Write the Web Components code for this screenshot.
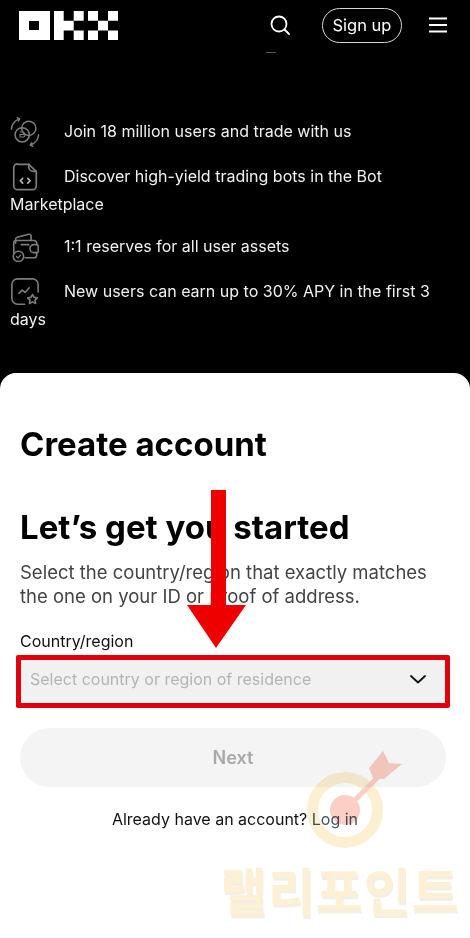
<!DOCTYPE html>
<html lang="en">
<head>
<meta charset="utf-8">
<title>OKX - Create account</title>
<style>
  html, body { margin: 0; background: #000; }
  body { font-family: Inter, "Liberation Sans", sans-serif; width: 470px; height: 938px; overflow: hidden; position: relative; }
</style>
</head>
<body>
<okx-header></okx-header>

<feature-list>
  <feature-row text="Join 18 million users and trade with us">
    <svg slot="icon" viewBox="0 0 32 32" fill="none" stroke="#7d7d7d" stroke-width="1.6" stroke-linecap="round">
      <circle cx="13" cy="19" r="7.600"/><circle cx="20" cy="12" r="7.600"/>
      <path d="M10.600 16h3.400a1.300 1.300 0 0 1 0 2.700h-3.400m0 0h3.800a1.300 1.300 0 0 1 0 2.700h-3.800z" stroke-width="1.100"/>
      <path d="M1.500 13c.4-5 3.300-9 8.500-11M8 .8l2.200 1.300-1.300 2.200M30.500 19c-.4 5-3.300 9-8.500 11M24 31.200l-2.200-1.300 1.300-2.200"/>
    </svg>
  </feature-row>
  <feature-row text="Discover high-yield trading bots in the Bot Marketplace">
    <svg slot="icon" viewBox="0 0 32 32" fill="none" stroke="#7d7d7d" stroke-width="1.8" stroke-linecap="round" stroke-linejoin="round">
      <path d="M8 2.500h12v2.500a5 5 0 0 0 5 5h3v15.500a4 4 0 0 1-4 4H8a4 4 0 0 1-4-4v-19.500a4 4 0 0 1 4-4z"/>
      <path d="M20 2.500 28 10"/>
      <path d="M13.500 17.500 11 20l2.500 2.500M19 17.500l2.500 2.500-2.500 2.500" stroke="#b5b5b5"/>
    </svg>
  </feature-row>
  <feature-row text="1:1 reserves for all user assets">
    <svg slot="icon" viewBox="0 0 32 32" fill="none" stroke="#7d7d7d" stroke-width="1.7" stroke-linecap="round" stroke-linejoin="round">
      <path d="M6 12V7.500a2 2 0 0 1 1.500-1.900L20 2.500a2 2 0 0 1 2.500 2V9"/>
      <path d="M9 9h16.500a3 3 0 0 1 3 3v1.500M4 22v-10.500a2.500 2.500 0 0 1 2.500-2.500H9M16 27.500h9.500a3 3 0 0 0 3-3V22"/>
      <path d="M28.500 13.500h-3a4.200 4.200 0 0 0 0 8.500h3a1.500 1.500 0 0 0 1.500-1.500v-5.500a1.500 1.500 0 0 0-1.500-1.500z"/>
      <path d="M12 13.500h8"/>
      <circle cx="9" cy="26" r="5.500"/><path d="m6.800 26 1.700 1.700 2.800-3" stroke-width="1.300"/>
    </svg>
  </feature-row>
  <feature-row text="New users can earn up to 30% APY in the first 3 days">
    <svg slot="icon" viewBox="0 0 32 32" fill="none" stroke="#7d7d7d" stroke-width="1.7" stroke-linecap="round" stroke-linejoin="round">
      <path d="M15.500 29H8A6 6 0 0 1 2 23V8A6 6 0 0 1 8 2h16a6 6 0 0 1 6 6v8"/>
      <path d="m9.500 17.500 3.500-3.500 3 2.500 4.500-5"/>
      <path d="m24 18.500 1.700 3.200 3.500.5-2.500 2.500.6 3.500-3.300-1.700-3.300 1.700.6-3.500-2.500-2.500 3.500-.5z"/>
    </svg>
  </feature-row>
</feature-list>

<okx-sheet>
  <h-title size="33" slot="top">Create account</h-title>
  <h-title size="33" slot="step">Let’s get you started</h-title>
  <span slot="lead">Select the country/region that exactly matches the one on your ID or proof of address.</span>
  <okx-select slot="field" label="Country/region" placeholder="Select country or region of residence"></okx-select>
  <okx-button slot="action">Next</okx-button>
  <login-line slot="foot"></login-line>
</okx-sheet>

<down-arrow></down-arrow>
<rally-mark></rally-mark>

<script>
class OkxHeader extends HTMLElement {
  constructor() {
    super();
    this.attachShadow({ mode: 'open' });
    this.shadowRoot.innerHTML = `
      <style>
        :host { display: flex; align-items: center; height: 50px; padding: 0 23px 0 19px; color: #fff; position: relative; }
        .logo { width: 99px; height: 29px; display: block; }
        .right { margin-left: auto; display: flex; align-items: center; }
        .search { width: 22px; height: 22px; display: block; margin-right: 31px; }
        .pill { box-sizing: border-box; width: 80px; height: 35px; border: 1.3px solid #d8d8d8; border-radius: 18px; display: flex; align-items: center; justify-content: center; font-size: 16.500px; margin-right: 27px; }
        .menu { width: 18px; height: 16px; display: block; }
        .tick { position: absolute; left: 266px; top: 52px; width: 10px; height: 1px; background: #555; }
      </style>
      <svg class="logo" viewBox="0 0 99 29" fill="#fff">
        <path fill-rule="evenodd" d="M0 0h31v29H0zM10 10v9h10v-9z"/>
        <path d="M35 0h9.700v29H35zM44.700 9.700h10v9.700h-10zM54.700 0h10v9.700h-10zM54.700 19.400h10V29h-10z"/>
        <path d="M69 0h10v9.700H69zM89 0h10v9.700H89zM79 9.700h10v9.700H79zM69 19.400h10V29H69zM89 19.400h10V29H89z"/>
      </svg>
      <div class="right">
        <svg class="search" viewBox="0 0 22 22" fill="none" stroke="#fff" stroke-width="1.8" stroke-linecap="round">
          <circle cx="10" cy="10" r="7.500"/><path d="m15.500 15.500 4.500 4.500"/>
        </svg>
        <div class="pill">Sign up</div>
        <svg class="menu" viewBox="0 0 18 16" stroke="#fff" stroke-width="1.800"><path d="M0 1.500h18M0 8h18M0 14.500h18"/></svg>
      </div>
      <div class="tick"></div>`;
  }
}
customElements.define('okx-header', OkxHeader);

class FeatureList extends HTMLElement {
  constructor() {
    super();
    this.attachShadow({ mode: 'open' });
    this.shadowRoot.innerHTML = `
      <style>
        :host { display: block; box-sizing: border-box; height: 323px; padding: 67px 20px 0 10px; }
      </style>
      <slot></slot>`;
  }
}
customElements.define('feature-list', FeatureList);

class FeatureRow extends HTMLElement {
  constructor() {
    super();
    this.attachShadow({ mode: 'open' });
    this.shadowRoot.innerHTML = `
      <style>
        :host { display: flow-root; min-height: 31px; margin-bottom: 14px; color: #f0f0f0; font-size: 16px; line-height: 28px; }
        /* el icono solo ocupa la primera linea; el texto vuelve al margen debajo */
        .icon { float: left; width: 54px; height: 28px; }
        ::slotted(svg) { width: 30px; height: 30px; display: block; }
      </style>
      <div class="icon"><slot name="icon"></slot></div><span class="t"></span>`;
  }
  connectedCallback() {
    this.shadowRoot.querySelector('.t').textContent = this.getAttribute('text');
  }
}
customElements.define('feature-row', FeatureRow);

class OkxSheet extends HTMLElement {
  constructor() {
    super();
    this.attachShadow({ mode: 'open' });
    this.shadowRoot.innerHTML = `
      <style>
        :host { display: block; box-sizing: border-box; height: 565px; background: #fff; border-radius: 16px 16px 0 0; padding: 51px 24px 0 20px; color: #000; }
        .step { margin-top: 43px; }
        .lead { margin-top: 13px; font-size: 18.500px; line-height: 24px; color: #444; }
        .field { margin-top: 23px; }
        .action { margin-top: 25px; }
        .foot { margin-top: 21px; }
      </style>
      <slot name="top"></slot>
      <div class="step"><slot name="step"></slot></div>
      <div class="lead"><slot name="lead"></slot></div>
      <div class="field"><slot name="field"></slot></div>
      <div class="action"><slot name="action"></slot></div>
      <div class="foot"><slot name="foot"></slot></div>`;
  }
}
customElements.define('okx-sheet', OkxSheet);

class HTitle extends HTMLElement {
  constructor() {
    super();
    this.attachShadow({ mode: 'open' });
    this.shadowRoot.innerHTML = `
      <style>
        :host { display: block; font-weight: 700; line-height: 40px; color: #000; }
      </style>
      <slot></slot>`;
  }
  connectedCallback() {
    this.style.fontSize = this.getAttribute('size') + 'px';
  }
}
customElements.define('h-title', HTitle);

class OkxSelect extends HTMLElement {
  constructor() {
    super();
    this.attachShadow({ mode: 'open' });
    this.shadowRoot.innerHTML = `
      <style>
        :host { display: block; }
        label { display: block; font-size: 16px; line-height: 20px; color: #111; margin-bottom: 8px; }
        .box { position: relative; box-sizing: border-box; height: 44px; background: #f1f1f2; display: flex; align-items: center; padding: 0 20px 4px 10px; font-size: 16px; color: #b4b4b4; }
        .box svg { margin-left: auto; width: 16px; height: 9px; display: block; }
        /* marco rojo de la captura */
        .mark { position: absolute; inset: -4px -4px -5px -4px; border: 5px solid #e1000f; border-radius: 2px; pointer-events: none; }
      </style>
      <label></label>
      <div class="box">
        <span class="ph"></span>
        <svg viewBox="0 0 16 9" fill="none" stroke="#111" stroke-width="1.800" stroke-linecap="round" stroke-linejoin="round"><path d="m1 1 7 6.500L15 1"/></svg>
        <div class="mark"></div>
      </div>`;
  }
  connectedCallback() {
    this.shadowRoot.querySelector('label').textContent = this.getAttribute('label');
    this.shadowRoot.querySelector('.ph').textContent = this.getAttribute('placeholder');
  }
}
customElements.define('okx-select', OkxSelect);

class OkxButton extends HTMLElement {
  constructor() {
    super();
    this.attachShadow({ mode: 'open' });
    this.shadowRoot.innerHTML = `
      <style>
        :host { display: flex; align-items: center; justify-content: center; height: 59px; border-radius: 30px; background: #f4f4f4; color: #a9a9a9; font-size: 18px; font-weight: 600; }
      </style>
      <slot></slot>`;
  }
}
customElements.define('okx-button', OkxButton);

class LoginLine extends HTMLElement {
  constructor() {
    super();
    this.attachShadow({ mode: 'open' });
    this.shadowRoot.innerHTML = `
      <style>
        :host { display: block; text-align: center; padding-left: 4px; font-size: 16px; line-height: 22px; color: #111; }
        a { color: #3f5566; text-decoration: none; }
      </style>
      Already have an account? <a>Log in</a>`;
  }
}
customElements.define('login-line', LoginLine);

class DownArrow extends HTMLElement {
  constructor() {
    super();
    this.attachShadow({ mode: 'open' });
    this.shadowRoot.innerHTML = `
      <style>
        :host { position: absolute; left: 186px; top: 490px; width: 61px; height: 159px; display: block; }
        svg { display: block; }
      </style>
      <svg width="61" height="159" viewBox="0 0 61 159"><path fill="#ee0000" d="M25 0h15v115h20l-30 43L1 115h24z"/></svg>`;
  }
}
customElements.define('down-arrow', DownArrow);

class RallyMark extends HTMLElement {
  constructor() {
    super();
    this.attachShadow({ mode: 'open' });
    this.shadowRoot.innerHTML = `
      <style>
        :host { position: absolute; left: 0; top: 0; width: 470px; height: 938px; display: block; pointer-events: none; mix-blend-mode: multiply; }
        svg { position: absolute; left: 300px; top: 745px; display: block; }
        .txt { position: absolute; left: 220px; top: 855px; font: 700 51px/68px "Noto Sans CJK KR", sans-serif; letter-spacing: 1px; color: #fef0d4; text-shadow: 1px 3px 0 #f3efe6; white-space: nowrap; }
      </style>
      <svg width="110" height="115" viewBox="0 0 110 115" fill="none">
        <circle cx="45" cy="65" r="32.500" stroke="#fdf0d2" stroke-width="11"/>
        <circle cx="45" cy="65" r="15" fill="#fbcfc4"/>
        <path d="M46 64 88 22" stroke="#fbcfc4" stroke-width="5"/>
        <path d="m69 23 14-17 6 12 13 1-18 15-11-1z" fill="#fbcfc4"/>
      </svg>
      <div class="txt">랠리포인트</div>`;
  }
}
customElements.define('rally-mark', RallyMark);
</script>
</body>
</html>
